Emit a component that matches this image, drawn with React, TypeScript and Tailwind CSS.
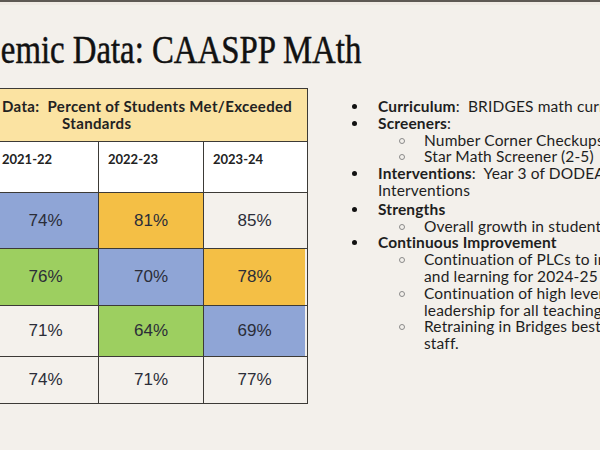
import React from "react";

const sans = { fontFamily: "Lato, 'Noto Sans', sans-serif" };

type Cell = { v?: string; bg: string };

const rows: { h: string; cells: Cell[] }[] = [
  { h: "h-[56px]", cells: [{ v: "74%", bg: "bg-[#8fa5d6]" }, { v: "81%", bg: "bg-[#f4bf45]" }, { v: "85%", bg: "bg-[#f4f1ec]" }] },
  { h: "h-[57px]", cells: [{ v: "76%", bg: "bg-[#9dcf60]" }, { v: "70%", bg: "bg-[#8fa5d6]" }, { v: "78%", bg: "bg-[#f4bf45]" }] },
  { h: "h-[51px]", cells: [{ v: "71%", bg: "bg-[#f4f1ec]" }, { v: "64%", bg: "bg-[#9dcf60]" }, { v: "69%", bg: "bg-[#8fa5d6]" }] },
  { h: "h-[46px]", cells: [{ v: "74%", bg: "bg-[#f4f1ec]" }, { v: "71%", bg: "bg-[#f4f1ec]" }, { v: "77%", bg: "bg-[#f4f1ec]" }] },
];

function Bullet({ children, sub }: { children: React.ReactNode; sub?: boolean }) {
  return (
    <div className={`flex ${sub ? "pl-[46px]" : ""}`}>
      <div className="w-[28px] shrink-0 flex justify-start items-start">
        {sub ? (
          <span className="mt-[6px] ml-[3px] block w-[6px] h-[6px] rounded-full border border-[#8a8a8a]" />
        ) : (
          <span className="mt-[6px] ml-[2px] block w-[5px] h-[5px] rounded-full bg-[#111]" />
        )}
      </div>
      <div className="whitespace-nowrap">{children}</div>
    </div>
  );
}

export default function App() {
  return (
    <div className="w-[600px] h-[450px] bg-[#f3f0eb] overflow-hidden relative">
      <div className="h-[2px] bg-[#5d5954]" />
      <div className="h-[3px] bg-[#efeae4]" />
      <div
        className="pt-[21px] pl-[1px] h-[83px] text-[40px] leading-[48px] text-[#111] whitespace-nowrap origin-left scale-x-[0.82] font-medium"
        style={{ fontFamily: "'Liberation Serif', serif", WebkitTextStroke: "0.5px #111" }}
      >
        emic Data: CAASPP MAth
      </div>
      <div className="flex">
        {/* Table */}
        <div className="-ml-[7px] w-[315px] shrink-0 border-t-[1.5px] border-r-[1.5px] border-b-[1.5px] border-[#3c3a36]">
          <div className="h-[53px] bg-[#fbe3a2] border-b border-[#3c3a36] text-[15px] font-bold text-[#222] leading-[17px] pt-[9px]" style={sans}>
            <div className="pl-[9px] whitespace-nowrap tracking-[0.35px]">Data:&nbsp; Percent of Students Met/Exceeded</div>
            <div className="pl-[69px] whitespace-nowrap tracking-[0.35px]">Standards</div>
          </div>
          <div className="grid grid-cols-[105px_105px_102px] h-[51px] bg-white border-b border-[#3c3a36]" style={sans}>
            {["2021-22", "2022-23", "2023-24"].map((y, i) => (
              <div key={y} className={`pl-[9px] pt-[8px] text-[13px] font-bold text-[#222] ${i > 0 ? "border-l border-[#3c3a36] pl-[7px]" : ""}`}>
                {y}
              </div>
            ))}
          </div>
          {rows.map((r, ri) => (
            <div key={ri} className={`grid grid-cols-[105px_105px_102px] ${r.h} ${ri < rows.length - 1 ? "border-b border-[#3c3a36]" : ""}`}>
              {r.cells.map((c, ci) => (
                <div
                  key={ci}
                  className={`${c.bg} flex items-center justify-center text-[17px] text-[#2b2d38] ${ci > 0 ? "border-l border-[#3c3a36]" : ""}`}
                  style={{ fontFamily: "'Liberation Sans', Arial, sans-serif" }}
                >
                  {c.v}
                </div>
              ))}
            </div>
          ))}
        </div>
        {/* Bullets */}
        <div className="ml-[42px] pt-[10px] text-[15.5px] leading-[16.8px] tracking-[0.15px] text-[#1e1e1e]" style={sans}>
          <Bullet><b>Curriculum</b>:&nbsp; BRIDGES math curriculum</Bullet>
          <Bullet><b>Screeners</b>:</Bullet>
          <Bullet sub>Number Corner Checkups (K-1)</Bullet>
          <Bullet sub>Star Math Screener (2-5)</Bullet>
          <Bullet><b>Interventions</b>:&nbsp; Year 3 of DODEA Math<br />Interventions</Bullet>
          <div className="h-[2px]" />
          <Bullet><b>Strengths</b></Bullet>
          <Bullet sub>Overall growth in student achievement</Bullet>
          <Bullet><b>Continuous Improvement</b></Bullet>
          <Bullet sub>Continuation of PLCs to improve teaching<br />and learning for 2024-25 school year</Bullet>
          <Bullet sub>Continuation of high leverage<br />leadership for all teaching staff</Bullet>
          <Bullet sub>Retraining in Bridges best practices for all<br />staff.</Bullet>
        </div>
      </div>
    </div>
  );
}
